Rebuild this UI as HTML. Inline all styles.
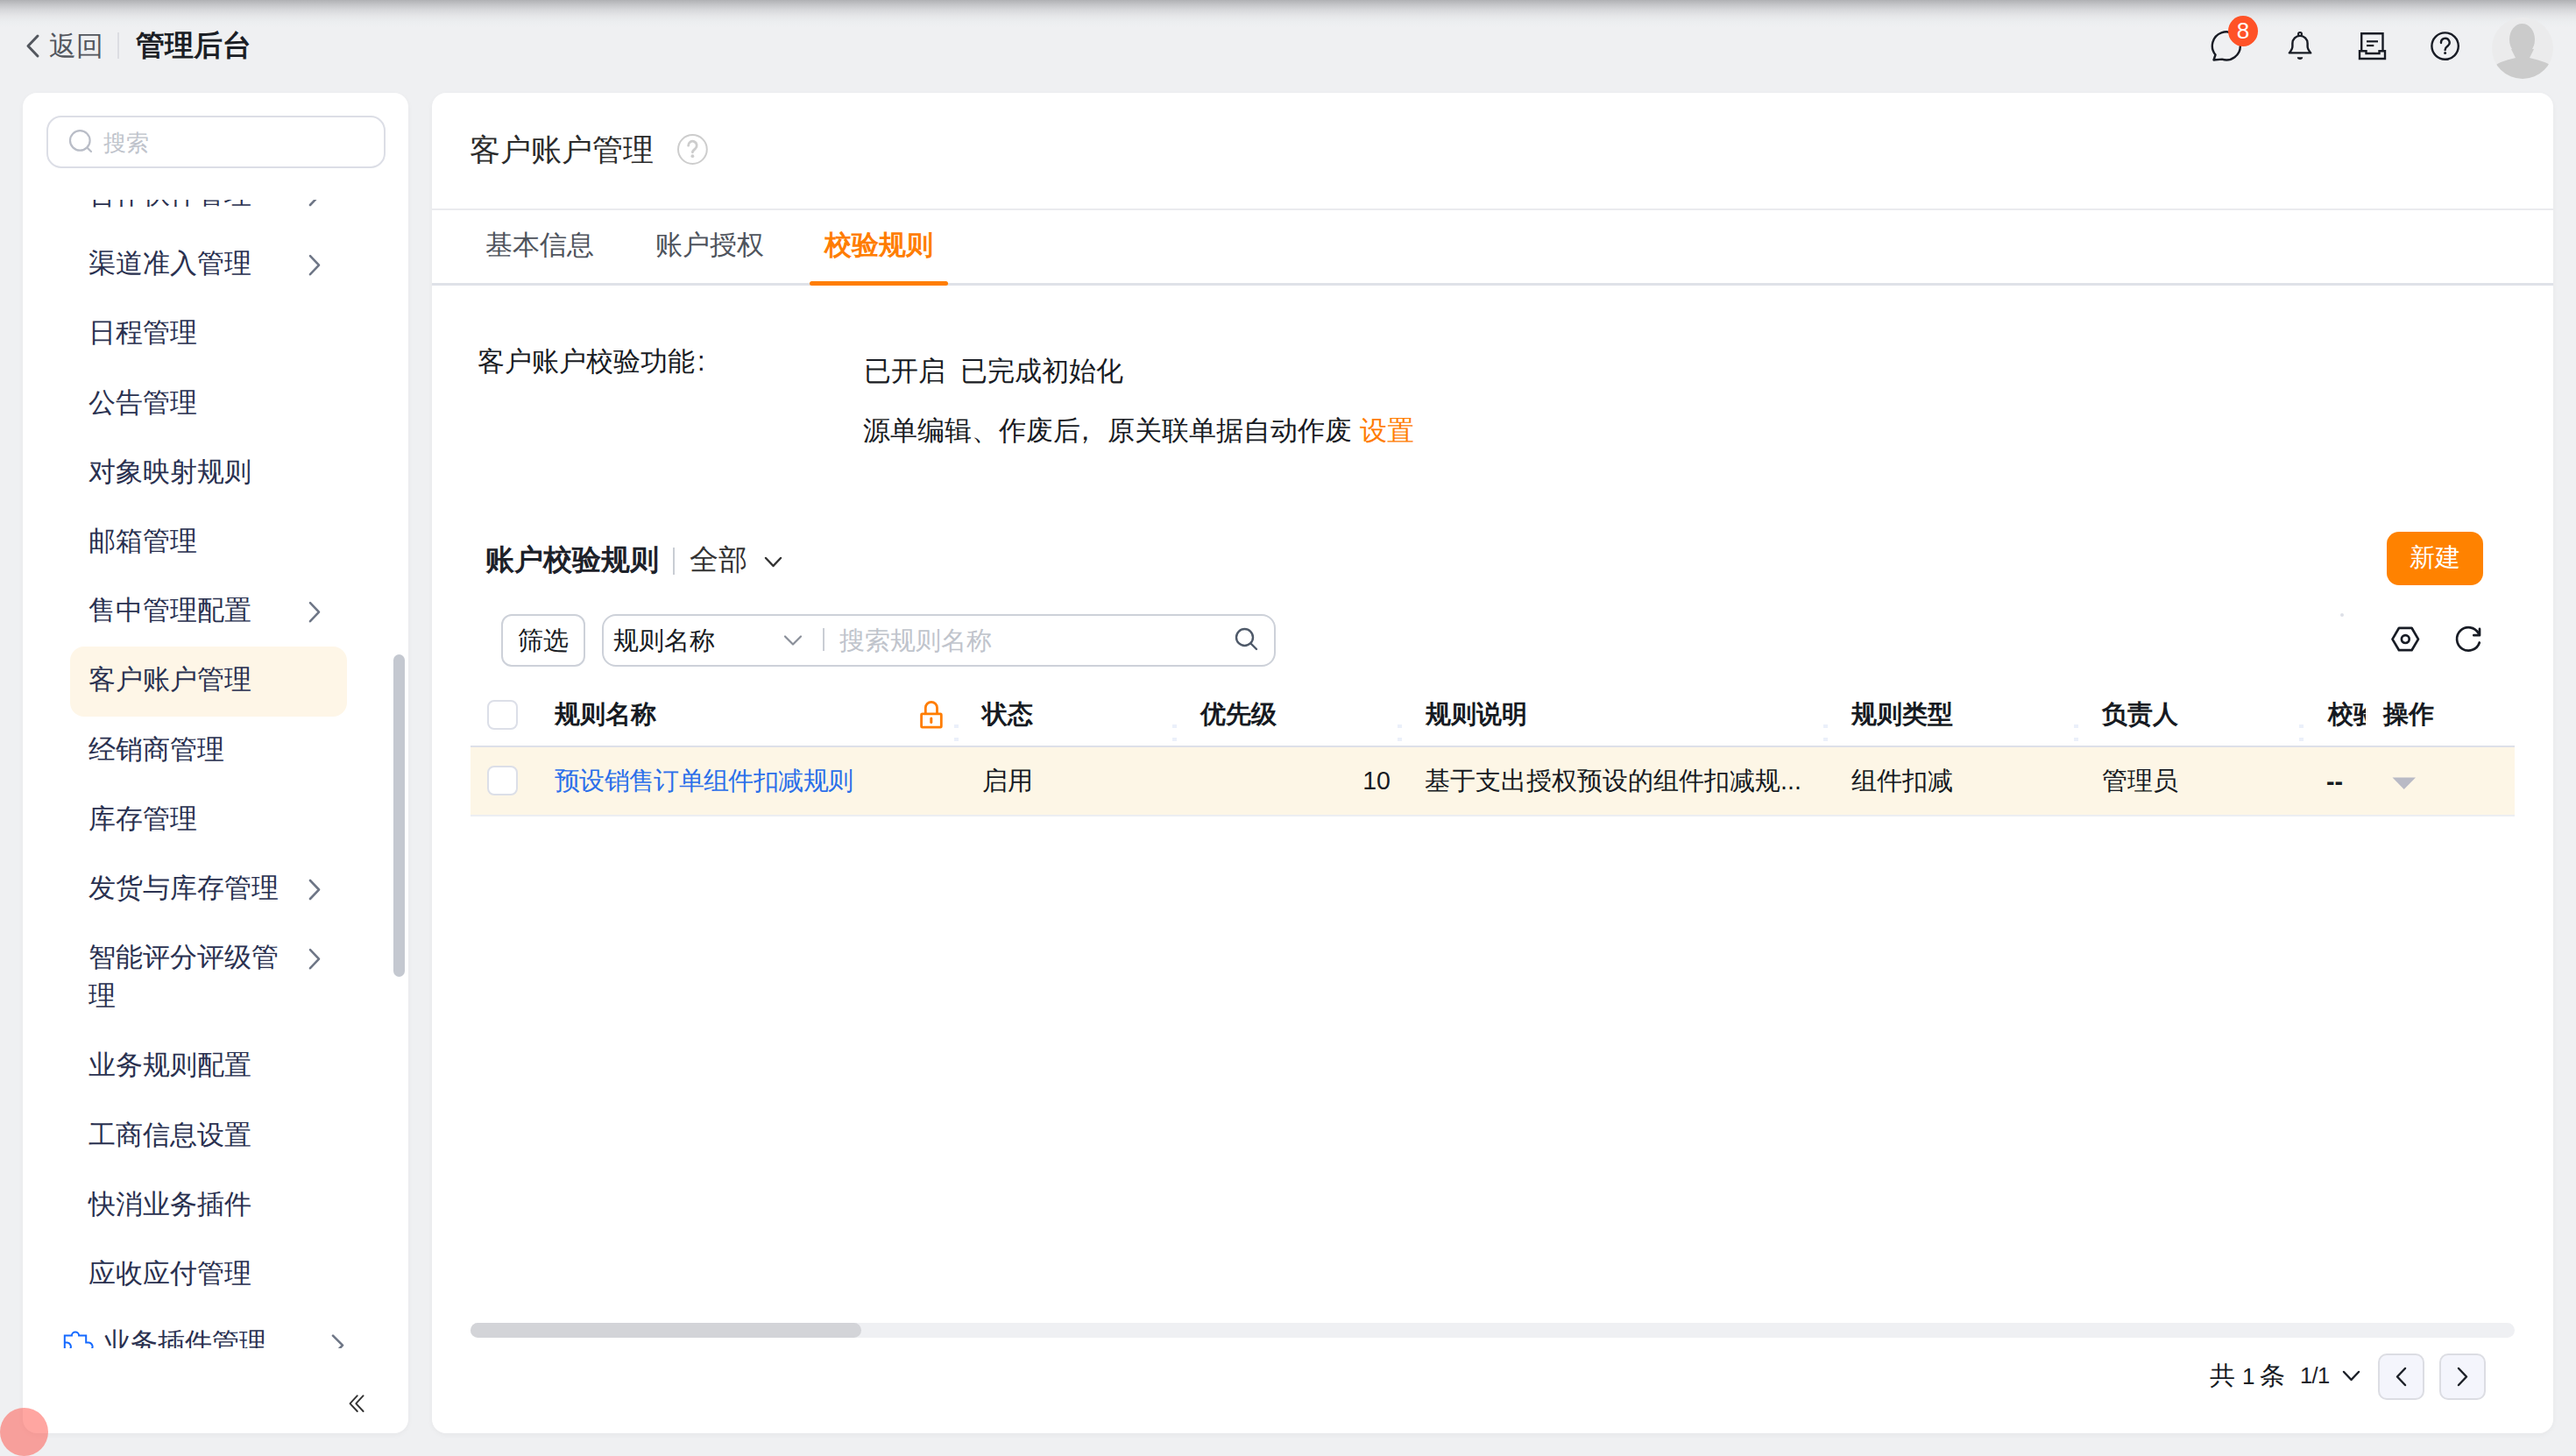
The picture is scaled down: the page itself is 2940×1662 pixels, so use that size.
<!DOCTYPE html>
<html><head><meta charset="utf-8">
<style>
*{box-sizing:border-box;margin:0;padding:0}
html,body{width:2940px;height:1662px;overflow:hidden}
body{position:relative;background:#eff0f2;font-family:"Liberation Sans",sans-serif;color:#1d2129}
.a{position:absolute;white-space:nowrap}
.topshade{position:absolute;left:0;top:0;width:2940px;height:32px;background:linear-gradient(#b0b1b4 0px,#c3c4c7 5px,#d6d7da 11px,#e5e6e8 18px,#eceef0 25px,rgba(239,240,242,0) 32px)}
.card{position:absolute;background:#fff;border-radius:16px;box-shadow:0 2px 6px rgba(0,0,0,0.04)}
.t14{font-size:30.8px;line-height:44px}
.t13{font-size:28.6px;line-height:40px}
.t15{font-size:33px;line-height:44px}
.side{color:#2a3150}
svg.i{position:absolute;left:0;top:0;overflow:visible}
.clip{position:absolute;overflow:hidden}
</style></head><body>
<div class="topshade"></div>
<svg class="i" width="1" height="1"><polyline points="43,41 32,52.5 43,64" fill="none" stroke="#53575e" stroke-width="3" stroke-linecap="round" stroke-linejoin="round"/><rect x="134" y="37" width="2" height="30" fill="#dcdde2"/></svg>
<div class="a t14" style="left:56px;top:30.5px;color:#53575e">返回</div>
<div class="a t15" style="left:155px;top:29.5px;font-weight:bold;color:#1b1e25">管理后台</div>
<svg class="i" width="1" height="1"><path d="M2528.5,62.5 A16,16 0 1 1 2536,67.6 L2526.5,68.5 Z" fill="none" stroke="#181c25" stroke-width="2.4" stroke-linejoin="round"/></svg>
<div class="a" style="left:2543px;top:18px;width:34px;height:35px;border-radius:50%;background:#ff5227"></div>
<div class="a" style="left:2543px;top:18px;width:34px;height:35px;line-height:35px;text-align:center;color:#fff;font-size:26px">8</div>
<svg class="i" width="1" height="1"><path d="M2612.8,60.4 H2637.2 Q2633.6,56 2633.6,53 V49.5 A8.6,8.6 0 0 0 2616.4,49.5 V53 Q2616.4,56 2612.8,60.4 Z" fill="none" stroke="#181c25" stroke-width="2.4" stroke-linejoin="round"/><circle cx="2625" cy="39" r="2" fill="none" stroke="#181c25" stroke-width="2"/><path d="M2621.8,65.2 H2628.2 A3.2,2.7 0 0 1 2621.8,65.2 Z" fill="#181c25"/></svg>
<svg class="i" width="1" height="1"><path d="M2695.2,57.5 V38.2 H2719.5 V57.5" fill="none" stroke="#181c25" stroke-width="2.4"/><path d="M2693,58.3 H2700.5 V61 H2715.5 V58.3 H2722 V67 H2693 Z" fill="none" stroke="#181c25" stroke-width="2.4"/><rect x="2701" y="46.2" width="13" height="2.2" fill="#181c25"/><rect x="2701" y="50.9" width="8.3" height="2.2" fill="#181c25"/></svg>
<svg class="i" width="1" height="1"><circle cx="2790.6" cy="52.6" r="15.2" fill="none" stroke="#181c25" stroke-width="2.4"/><path d="M2786,49 A4.8,4.8 0 1 1 2793.5,52.5 C2791.5,54 2790.6,55 2790.6,57" fill="none" stroke="#181c25" stroke-width="2.4" stroke-linecap="round"/><circle cx="2790.6" cy="60.6" r="1.5" fill="#181c25"/></svg>
<div class="a" style="left:2844px;top:19.7px;width:70px;height:70px;border-radius:50%;background:#ebebec;overflow:hidden"><svg width="70" height="70" style="position:absolute;left:0;top:0"><ellipse cx="34.5" cy="25" rx="14.5" ry="18" fill="#cbcbcb"/><path d="M22,36 L27,46 C20,48 10,50 5,54 C10,66 22,72 35,72 C48,72 60,66 66,54 C60,50 50,48 43,46 L48,36 Z" fill="#cbcbcb"/></svg></div>
<div class="card" style="left:26px;top:106px;width:440px;height:1530px"></div>
<div class="card" style="left:493px;top:106px;width:2421px;height:1530px"></div>
<div class="a" style="left:53px;top:132px;width:387px;height:60px;border:2px solid #dcdee6;border-radius:17px"></div>
<svg class="i" width="1" height="1"><circle cx="91.3" cy="160.4" r="11.3" fill="none" stroke="#b9bdc7" stroke-width="2.2"/><line x1="99.5" y1="168.6" x2="104" y2="173" stroke="#b9bdc7" stroke-width="2.2" stroke-linecap="round"/></svg>
<div class="a t14" style="left:117.5px;top:141.2px;color:#c0c4cc;font-size:26.4px">搜索</div>
<div class="clip" style="left:26px;top:228px;width:440px;height:1311px">
<div class="a t14 side" style="left:75px;top:-28.0px">合作伙伴管理</div>
<svg class="i" width="1" height="1"><polyline points="328,-15.0 338,-4.5 328,6.0" fill="none" stroke="#6e7686" stroke-width="2.6" stroke-linecap="round" stroke-linejoin="round"/></svg>
<div class="a t14 side" style="left:75px;top:51.2px">渠道准入管理</div>
<svg class="i" width="1" height="1"><polyline points="328,64.2 338,74.7 328,85.2" fill="none" stroke="#6e7686" stroke-width="2.6" stroke-linecap="round" stroke-linejoin="round"/></svg>
<div class="a t14 side" style="left:75px;top:130.4px">日程管理</div>
<div class="a t14 side" style="left:75px;top:209.6px">公告管理</div>
<div class="a t14 side" style="left:75px;top:288.8px">对象映射规则</div>
<div class="a t14 side" style="left:75px;top:368.0px">邮箱管理</div>
<div class="a t14 side" style="left:75px;top:447.2px">售中管理配置</div>
<svg class="i" width="1" height="1"><polyline points="328,460.2 338,470.7 328,481.2" fill="none" stroke="#6e7686" stroke-width="2.6" stroke-linecap="round" stroke-linejoin="round"/></svg>
<div class="a" style="left:53.599999999999994px;top:510.0px;width:316px;height:79.5px;border-radius:16px;background:#fef6e7"></div>
<div class="a t14 side" style="left:75px;top:526.4px">客户账户管理</div>
<div class="a t14 side" style="left:75px;top:605.6px">经销商管理</div>
<div class="a t14 side" style="left:75px;top:684.8px">库存管理</div>
<div class="a t14 side" style="left:75px;top:764.0px">发货与库存管理</div>
<svg class="i" width="1" height="1"><polyline points="328,777.0 338,787.5 328,798.0" fill="none" stroke="#6e7686" stroke-width="2.6" stroke-linecap="round" stroke-linejoin="round"/></svg>
<div class="a t14 side" style="left:75px;top:843.2px">智能评分评级管<br>理</div>
<svg class="i" width="1" height="1"><polyline points="328,856.2 338,866.7 328,877.2" fill="none" stroke="#6e7686" stroke-width="2.6" stroke-linecap="round" stroke-linejoin="round"/></svg>
<div class="a t14 side" style="left:75px;top:966.4px">业务规则配置</div>
<div class="a t14 side" style="left:75px;top:1045.6px">工商信息设置</div>
<div class="a t14 side" style="left:75px;top:1124.8px">快消业务插件</div>
<div class="a t14 side" style="left:75px;top:1204.0px">应收应付管理</div>
<div class="a t14 side" style="left:92px;top:1283.2px">业务插件管理</div>
<svg class="i" width="1" height="1"><polyline points="354,1296.7 365,1307.7 354,1318.7" fill="none" stroke="#6e7686" stroke-width="2.6" stroke-linecap="round" stroke-linejoin="round"/></svg>
<svg class="i" width="1" height="1"><path transform="translate(-26,-228)" d="M73.8,1540 V1524.5 H81.9 A4.1,4.1 0 0 1 90.1,1524.5 H98.2 V1532.5 H100.5 A4.6,4.6 0 0 1 104.5,1540 M73.8,1532.5 H75.8 A4.6,4.6 0 0 1 79.8,1540" fill="none" stroke="#1469ff" stroke-width="2"/></svg>
</div>
<div class="a" style="left:449px;top:747px;width:13px;height:368px;border-radius:7px;background:#c4c8d0"></div>
<svg class="i" width="1" height="1"><polyline points="407.8,1593.2 399.5,1602.1 407.8,1611" fill="none" stroke="#333" stroke-width="1.9" stroke-linecap="round" stroke-linejoin="round"/><polyline points="414.6,1593.2 406.3,1602.1 414.6,1611" fill="none" stroke="#333" stroke-width="1.9" stroke-linecap="round" stroke-linejoin="round"/></svg>
<div class="a a" style="left:536px;top:147.0px;font-size:35.2px;line-height:48px;color:#2b2b2b">客户账户管理</div>
<svg class="i" width="1" height="1"><circle cx="790.4" cy="170.5" r="16.4" fill="none" stroke="#cdcdcd" stroke-width="2"/><path d="M785.6,166.2 A4.8,4.8 0 1 1 793.6,169.6 C791.4,171.4 790.4,172.4 790.4,173.8" fill="none" stroke="#cdcdcd" stroke-width="2.8" stroke-linecap="round"/><circle cx="790.4" cy="178.2" r="1.9" fill="#cdcdcd"/></svg>
<div class="a" style="left:493px;top:238px;width:2421px;height:2px;background:#eaebee"></div>
<div class="a t14" style="left:554px;top:258.0px;color:#4e535c">基本信息</div>
<div class="a t14" style="left:748px;top:258.0px;color:#4e535c">账户授权</div>
<div class="a t14" style="left:941px;top:258.0px;color:#ff7d00;font-weight:bold">校验规则</div>
<div class="a" style="left:493px;top:323px;width:2421px;height:3px;background:#dfe2e8"></div>
<div class="a" style="left:924px;top:321px;width:158px;height:5px;border-radius:3px;background:#ff7d00"></div>
<div class="a t14" style="left:545px;top:390.5px;color:#181b23">客户账户校验功能<span style="margin-left:3px">:</span></div>
<div class="a t14" style="left:986px;top:401.7px;color:#181b23">已开启</div>
<div class="a t14" style="left:1096px;top:401.7px;color:#181b23">已完成初始化</div>
<div class="a t14" style="left:985px;top:470.0px;color:#181b23">源单编辑、作废后<span style="position:relative;left:-10px">，</span>原关联单据自动作废</div>
<div class="a t14" style="left:1552px;top:470.0px;color:#ff7d00">设置</div>
<div class="a t15" style="left:554px;top:617.0px;font-weight:bold;color:#1d2129">账户校验规则</div>
<div class="a" style="left:768px;top:625px;width:2px;height:31px;background:#c9cdd4"></div>
<div class="a t15" style="left:787px;top:617.0px;color:#333">全部</div>
<svg class="i" width="1" height="1"><polyline points="874,637 882.5,646 891,637" fill="none" stroke="#333" stroke-width="2.5" stroke-linecap="round" stroke-linejoin="round"/></svg>
<div class="a" style="left:2724px;top:607px;width:110px;height:61px;border-radius:14px;background:#ff8200"></div>
<div class="a t13" style="left:2750px;top:616.0px;color:#fff">新建</div>
<div class="a" style="left:572px;top:700.5px;width:96px;height:60px;border:2px solid #cdd1d9;border-radius:12px"></div>
<div class="a t13" style="left:591px;top:710.5px;color:#161a22">筛选</div>
<div class="a" style="left:686.5px;top:700.5px;width:769px;height:60px;border:2px solid #cdd1d9;border-radius:16px"></div>
<div class="a t13" style="left:700px;top:710.5px;color:#161a22">规则名称</div>
<svg class="i" width="1" height="1"><polyline points="896,726.5 905,735.5 914,726.5" fill="none" stroke="#8a8f99" stroke-width="2.2" stroke-linecap="round" stroke-linejoin="round"/><rect x="939" y="717" width="2" height="26" fill="#c9cdd4"/><circle cx="1420.5" cy="727.5" r="9.5" fill="none" stroke="#4e5969" stroke-width="2.4"/><line x1="1427.5" y1="734.5" x2="1434" y2="741" stroke="#4e5969" stroke-width="2.4" stroke-linecap="round"/></svg>
<div class="a t13" style="left:958px;top:710.5px;color:#c0c4cc">搜索规则名称</div>
<div class="a" style="left:2671px;top:700px;width:4px;height:4px;border-radius:50%;background:#dde0e8"></div>
<svg class="i" width="1" height="1"><polygon points="2730.5,729.6 2738,716.8 2752.5,716.8 2760,729.6 2752.5,742.2 2738,742.2" fill="none" stroke="#181c25" stroke-width="2.7" stroke-linejoin="round"/><circle cx="2745.3" cy="729.6" r="4.4" fill="none" stroke="#181c25" stroke-width="2.7"/><path d="M2829.8,733.5 A13.2,13.2 0 1 1 2828.8,723" fill="none" stroke="#181c25" stroke-width="2.7" stroke-linecap="round"/><polyline points="2830,717.8 2830,725.2 2823.3,725.2" fill="none" stroke="#181c25" stroke-width="2.7" stroke-linecap="round" stroke-linejoin="round"/></svg>
<div class="a" style="left:556px;top:798.5px;width:34.5px;height:34px;border:2px solid #dcdfe8;border-radius:8px;background:#fff"></div>
<div class="a t13" style="left:633px;top:794.5px;font-weight:bold;color:#161a22">规则名称</div>
<svg class="i" width="1" height="1"><rect x="1051.6" y="814.8" width="22.7" height="15.4" rx="1" fill="none" stroke="#ff7d00" stroke-width="2.8"/><path d="M1056.3,814.8 V808 A6.6,6.6 0 0 1 1069.5,808 V814.8" fill="none" stroke="#ff7d00" stroke-width="2.8"/><line x1="1062.8" y1="820" x2="1062.8" y2="824.5" stroke="#ff7d00" stroke-width="3" stroke-linecap="round"/></svg>
<div class="a t13" style="left:1121px;top:794.5px;font-weight:bold;color:#161a22">状态</div>
<div class="a t13" style="left:1370px;top:794.5px;font-weight:bold;color:#161a22">优先级</div>
<div class="a t13" style="left:1627px;top:794.5px;font-weight:bold;color:#161a22">规则说明</div>
<div class="a t13" style="left:2113px;top:794.5px;font-weight:bold;color:#161a22">规则类型</div>
<div class="a t13" style="left:2399px;top:794.5px;font-weight:bold;color:#161a22">负责人</div>
<div class="clip" style="left:2650px;top:795px;width:50px;height:40px"><div class="a t13" style="left:6.5px;top:-0.5px;line-height:40px;font-weight:bold;color:#161a22">校验</div></div>
<div class="a t13" style="left:2720px;top:794.5px;font-weight:bold;color:#161a22">操作</div>
<div class="a" style="left:1089px;top:827px;width:5px;height:4px;background:#ebf0fa"></div>
<div class="a" style="left:1089px;top:842px;width:5px;height:4px;background:#ebf0fa"></div>
<div class="a" style="left:1338px;top:827px;width:5px;height:4px;background:#ebf0fa"></div>
<div class="a" style="left:1338px;top:842px;width:5px;height:4px;background:#ebf0fa"></div>
<div class="a" style="left:1595px;top:827px;width:5px;height:4px;background:#ebf0fa"></div>
<div class="a" style="left:1595px;top:842px;width:5px;height:4px;background:#ebf0fa"></div>
<div class="a" style="left:2081px;top:827px;width:5px;height:4px;background:#ebf0fa"></div>
<div class="a" style="left:2081px;top:842px;width:5px;height:4px;background:#ebf0fa"></div>
<div class="a" style="left:2367px;top:827px;width:5px;height:4px;background:#ebf0fa"></div>
<div class="a" style="left:2367px;top:842px;width:5px;height:4px;background:#ebf0fa"></div>
<div class="a" style="left:2624px;top:827px;width:5px;height:4px;background:#ebf0fa"></div>
<div class="a" style="left:2624px;top:842px;width:5px;height:4px;background:#ebf0fa"></div>
<div class="a" style="left:537px;top:851px;width:2333px;height:2px;background:#dde0e9"></div>
<div class="a" style="left:537px;top:853px;width:2333px;height:77px;background:#fdf6e6"></div>
<div class="a" style="left:537px;top:930px;width:2333px;height:2px;background:#eceef2"></div>
<div class="a" style="left:556px;top:873.5px;width:34.5px;height:34px;border:2px solid #dcdfe8;border-radius:8px;background:#fff"></div>
<div class="a t13" style="left:633px;top:870.5px;color:#2b6fea;letter-spacing:-0.65px">预设销售订单组件扣减规则</div>
<div class="a t13" style="left:1121px;top:870.5px;color:#161a22">启用</div>
<div class="a t13" style="left:1500px;width:87px;text-align:right;top:870.5px;color:#161a22">10</div>
<div class="a t13" style="left:1626px;top:870.5px;color:#161a22">基于支出授权预设的组件扣减规...</div>
<div class="a t13" style="left:2113px;top:870.5px;color:#161a22">组件扣减</div>
<div class="a t13" style="left:2399px;top:870.5px;color:#161a22">管理员</div>
<div class="a t13" style="left:2655px;top:871.5px;color:#161a22;font-weight:bold">--</div>
<svg class="i" width="1" height="1"><polygon points="2730.5,887.5 2757,887.5 2743.7,901" fill="#b9bac5"/></svg>
<div class="a" style="left:537px;top:1510px;width:2333px;height:17px;border-radius:9px;background:#eff0f3"></div>
<div class="a" style="left:537px;top:1510px;width:446px;height:17px;border-radius:9px;background:#d3d4d8"></div>
<div class="a t13" style="left:2522px;top:1550.0px;color:#161a22">共<span style="font-size:26px;margin:0 6px 0 8px">1</span>条</div>
<div class="a t13" style="left:2625px;top:1550.0px;color:#1d2129;font-size:25.5px;letter-spacing:-0.6px">1/1</div>
<svg class="i" width="1" height="1"><polyline points="2675,1566 2683.5,1575 2692,1566" fill="none" stroke="#1d2129" stroke-width="2.5" stroke-linecap="round" stroke-linejoin="round"/></svg>
<div class="a" style="left:2714px;top:1545px;width:53px;height:53px;border:2px solid #dcdde3;border-radius:10px;background:#f4f5fc"></div>
<div class="a" style="left:2784px;top:1545px;width:53px;height:53px;border:2px solid #dcdde3;border-radius:10px;background:#f4f5fc"></div>
<svg class="i" width="1" height="1"><polyline points="2745,1562 2736,1571.5 2745,1581" fill="none" stroke="#1d2129" stroke-width="2.5" stroke-linecap="round" stroke-linejoin="round"/><polyline points="2806,1562 2815,1571.5 2806,1581" fill="none" stroke="#1d2129" stroke-width="2.5" stroke-linecap="round" stroke-linejoin="round"/></svg>
<div class="a" style="left:0;top:1607px;width:55px;height:55px;border-radius:50%;background:rgba(255,85,75,0.52)"></div>
</body></html>
